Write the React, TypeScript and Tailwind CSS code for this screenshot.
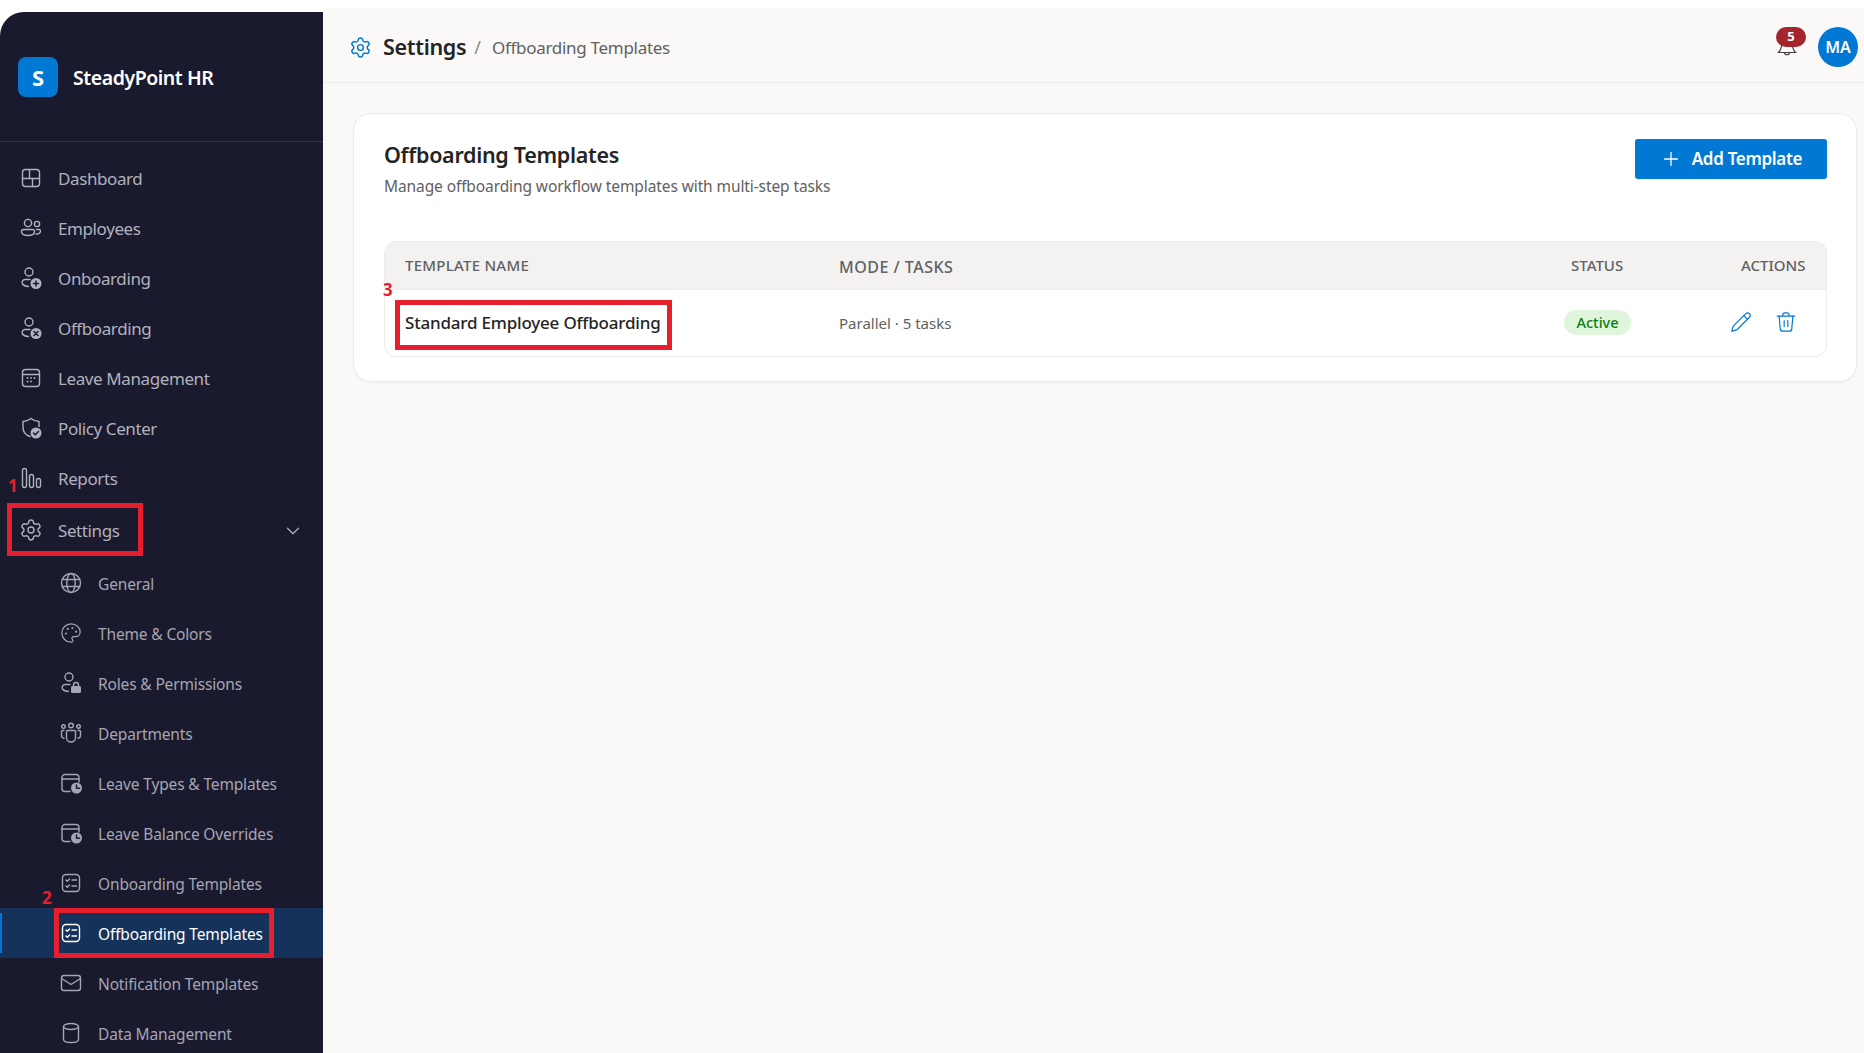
import { ChevronDown, Palette, Pencil, Plus, Settings } from "lucide-react";
import type { ReactNode } from "react";

const Ic = ({ children }: { children: ReactNode }) => (
	<svg viewBox="0 0 24 24" fill="none" stroke="currentColor" strokeWidth="1.4" strokeLinecap="round" strokeLinejoin="round" className="w-[24px] h-[24px] shrink-0">
		{children}
	</svg>
);

const Dashboard = () => (
	<Ic>
		<rect x="3.5" y="3.5" width="17" height="17" rx="3" />
		<path d="M10.5 3.5v9M3.5 12.5h17M13.5 12.5v8" />
	</Ic>
);
const People = () => (
	<Ic>
		<circle cx="9" cy="7" r="3.6" />
		<circle cx="18" cy="8" r="2.6" />
		<path d="M4.5 13.5h9a2 2 0 0 1 2 2c0 2.8-3 4-6.5 4s-6.5-1.2-6.5-4a2 2 0 0 1 2-2z" />
		<path d="M17.5 13.5h2.5a1.5 1.5 0 0 1 1.5 1.500c0 2-1.700 3-4.500 3" />
	</Ic>
);
const PersonBase = () => (
	<>
		<circle cx="10" cy="6" r="4" />
		<path d="M11 13.5H6a3 3 0 0 0-2.500 4.500c1 1.500 3 2.300 6 2.500" />
	</>
);
const PersonAdd = () => (
	<Ic>
		<PersonBase />
		<circle cx="17" cy="17.500" r="5.500" fill="currentColor" stroke="none" />
		<path d="M17 15v5M14.500 17.500h5" stroke="#1a1a2e" strokeWidth="1.500" />
	</Ic>
);
const PersonX = () => (
	<Ic>
		<PersonBase />
		<circle cx="17" cy="17.500" r="5.500" fill="currentColor" stroke="none" />
		<path d="M15 15.500l4 4M19 15.500l-4 4" stroke="#1a1a2e" strokeWidth="1.500" />
	</Ic>
);
const PersonLock = () => (
	<Ic>
		<PersonBase />
		<path d="M14.500 15v-1a2.500 2.500 0 0 1 5 0v1" />
		<rect x="12" y="15" width="10" height="7" rx="1.500" fill="currentColor" stroke="none" />
	</Ic>
);
const Calendar = () => (
	<Ic>
		<rect x="3.500" y="3.500" width="17" height="17" rx="3" />
		<path d="M3.500 8.500h17" />
		<path d="M8.500 12h.01M12 12h.01M15.500 12h.01M8.500 15.500h.01M12 15.500h.01" strokeWidth="1.800" />
	</Ic>
);
const Shield = () => (
	<Ic>
		<path d="M12 2.500c2.500 2 5 3 8 3v5M11 20.500C6.500 19 4 15.500 4 11V5.500c3 0 5.500-1 8-3" />
		<circle cx="17" cy="17" r="5.500" fill="currentColor" stroke="none" />
		<path d="M14.500 17l1.800 1.800 3.200-3.300" stroke="#1a1a2e" strokeWidth="1.500" />
	</Ic>
);
const Bars = () => (
	<Ic>
		<rect x="3.500" y="2.500" width="4" height="19" rx="2" />
		<rect x="10.500" y="8.500" width="4" height="13" rx="2" />
		<rect x="17.500" y="12.500" width="4" height="9" rx="2" />
	</Ic>
);
const GlobeIcon = () => (
	<Ic>
		<circle cx="12" cy="12" r="9.500" />
		<ellipse cx="12" cy="12" rx="4.200" ry="9.500" />
		<path d="M3.300 8.500h17.400M3.300 15.500h17.400" />
	</Ic>
);
const Team = () => (
	<Ic>
		<circle cx="12" cy="4.500" r="2.300" />
		<circle cx="4.500" cy="5.500" r="1.800" />
		<circle cx="19.500" cy="5.500" r="1.800" />
		<path d="M8.500 9.500h7a1 1 0 0 1 1 1v6a4.500 4.500 0 0 1-9 0v-6a1 1 0 0 1 1-1z" />
		<path d="M5 9.500H3.500a1 1 0 0 0-1 1v4c0 1.500 1 2.500 2.500 2.700M19 9.500h1.500a1 1 0 0 1 1 1v4c0 1.500-1 2.500-2.500 2.700" />
	</Ic>
);
const CalClock = () => (
	<Ic>
		<path d="M11 20.500H6a3 3 0 0 1-3-3v-11a3 3 0 0 1 3-3h11a3 3 0 0 1 3 3V11" />
		<path d="M3 8h17" />
		<circle cx="17.500" cy="17" r="5.500" fill="currentColor" stroke="none" />
		<path d="M17.500 14v3.200h3" stroke="#1a1a2e" strokeWidth="1.500" />
	</Ic>
);
const Checklist = () => (
	<Ic>
		<rect x="3.500" y="3.500" width="17" height="17" rx="3.500" />
		<path d="M7 9l1.300 1.300L10.500 8M13 9h4.500M7 15l1.300 1.300 2.200-2.300M13 15h4.500" />
	</Ic>
);
const Mail = () => (
	<Ic>
		<rect x="2.500" y="4.500" width="19" height="15" rx="2.500" />
		<path d="M2.500 7.500l9.500 6 9.500-6" />
	</Ic>
);
const Data = () => (
	<Ic>
		<ellipse cx="12" cy="5.500" rx="7.500" ry="3" />
		<path d="M4.500 5.500v13c0 1.700 3.400 3 7.500 3s7.500-1.300 7.500-3v-13" />
	</Ic>
);

const NavItem = ({ icon, label, note }: { icon: ReactNode; label: string; note?: ReactNode }) => (
	<div className="relative flex items-center h-[50px] pl-[19px] gap-[15px] text-[#b1b1bd] text-[17px] tracking-[-0.4px]">
		{icon}
		<span className="pt-[2px]">{label}</span>
		{note}
	</div>
);

const SubItem = ({ icon, label, active, note }: { icon: ReactNode; label: string; active?: boolean; note?: ReactNode }) => (
	<div
		className={
			active
				? "relative flex items-center h-[50px] pl-[59px] gap-[15px] text-white bg-[#14325a] text-[15.5px] tracking-[-0.15px]"
				: "relative flex items-center h-[50px] pl-[59px] gap-[15px] text-[#a5a5b3] text-[15.5px] tracking-[-0.15px]"
		}
	>
		{active && <div className="absolute left-0 top-[5px] bottom-[5px] w-[2px] bg-[#0078d4]" />}
		{icon}
		<span className="pt-[3px]">{label}</span>
		{note}
	</div>
);

const Num = ({ n, className }: { n: string; className: string }) => (
	<span className={"absolute font-bold text-[#e61e2d] text-[17px] leading-none " + className}>{n}</span>
);

export default function App() {
	return (
		<div className="flex h-screen w-full overflow-hidden bg-white font-['Noto_Sans',sans-serif]">
			<aside className="w-[323px] shrink-0 mt-[12px] bg-[#1a1a2e] rounded-tl-[24px] flex flex-col">
				<div className="h-[130px] shrink-0 border-b border-[#33334a] flex items-center gap-[15px] pl-[18px] pt-[1px]">
					<div className="w-[40px] h-[40px] rounded-[8px] bg-[#0078d4] flex items-center justify-center text-white font-bold text-[22px]">S</div>
					<span className="pt-[2px] text-white font-semibold text-[19.5px] tracking-[-0.45px]">SteadyPoint HR</span>
				</div>
				<nav className="flex flex-col pt-[11px]">
					<NavItem icon={<Dashboard />} label="Dashboard" />
					<NavItem icon={<People />} label="Employees" />
					<NavItem icon={<PersonAdd />} label="Onboarding" />
					<NavItem icon={<PersonX />} label="Offboarding" />
					<NavItem icon={<Calendar />} label="Leave Management" />
					<NavItem icon={<Shield />} label="Policy Center" />
					<NavItem icon={<Bars />} label="Reports" />
					<div className="mt-[2px] mb-[3px]">
						<NavItem
							icon={<Settings size={24} strokeWidth={1.4} />}
							label="Settings"
							note={
								<>
									<ChevronDown size={22} strokeWidth={1.3} className="absolute right-[19px] top-[15px]" />
									<div className="absolute left-[7px] top-[-2px] w-[136px] h-[53px] border-[5px] border-[#e61e2d]" />
									<Num n="1" className="left-[8px] top-[-28px]" />
								</>
							}
						/>
					</div>
					<SubItem icon={<GlobeIcon />} label="General" />
					<SubItem
						icon={
							<span className="w-[24px] h-[24px] shrink-0 flex items-center justify-center">
								<Palette size={22} strokeWidth={1.3} />
							</span>
						}
						label="Theme &amp; Colors"
					/>
					<SubItem icon={<PersonLock />} label="Roles &amp; Permissions" />
					<SubItem icon={<Team />} label="Departments" />
					<SubItem icon={<CalClock />} label="Leave Types &amp; Templates" />
					<SubItem icon={<CalClock />} label="Leave Balance Overrides" />
					<SubItem icon={<Checklist />} label="Onboarding Templates" />
					<SubItem
						icon={<Checklist />}
						label="Offboarding Templates"
						active
						note={
							<>
								<div className="absolute left-[54px] top-0 w-[220px] h-[50px] border-[5px] border-[#e61e2d]" />
								<Num n="2" className="left-[42px] top-[-19px]" />
							</>
						}
					/>
					<SubItem icon={<Mail />} label="Notification Templates" />
					<SubItem icon={<Data />} label="Data Management" />
				</nav>
			</aside>

			<main className="flex-1 min-w-0 mt-[8px] bg-[#faf9f8] flex flex-col">
				<header className="h-[75px] shrink-0 border-b border-[#edebe9] flex items-center pl-[26px] pr-[6px] pt-[4px]">
					<Settings size={23} strokeWidth={1.5} className="text-[#0078d4]" />
					<span className="ml-[11px] pt-[1px] font-semibold text-[#242424] text-[21.5px] tracking-[-0.3px]">Settings</span>
					<span className="ml-[8px] pt-[1px] text-[#8a8886] text-[18px]">/</span>
					<span className="ml-[11px] pt-[2px] text-[#616161] text-[17px] tracking-[-0.3px]">Offboarding Templates</span>
					<div className="ml-auto flex items-center gap-[12px]">
						<div className="relative w-[30px] h-[40px]">
							<svg viewBox="0 0 20 20" fill="none" stroke="#424242" strokeWidth="1.200" className="absolute left-[1px] top-[10px] w-[20px] h-[20px]">
								<path d="M5 4c0 6-1 9-3.500 11.500h17C16 13 15 10 15 4M7.500 15.500c0 3 5 3 5 0" />
							</svg>
							<span className="absolute left-0 top-0 w-[30px] h-[20px] rounded-full bg-[#a4262c] text-white text-[13px] font-bold flex items-center justify-center">5</span>
						</div>
						<div className="w-[40px] h-[40px] rounded-full bg-[#0078d4] text-white font-semibold text-[16px] flex items-center justify-center">MA</div>
					</div>
				</header>

				<div className="pl-[30px] pr-[7px] pt-[30px]">
					<section className="relative bg-white border border-[#edebe9] rounded-[18px] h-[269px] pl-[30px] pr-[29px] pt-[25px] shadow-[0_1px_2px_rgba(0,0,0,0.04)]">
						<div className="flex justify-between items-start h-[102px]">
							<div>
								<h2 className="font-semibold text-[#242424] text-[21.5px] leading-[32px] tracking-[-0.3px]">Offboarding Templates</h2>
								<p className="text-[#616161] text-[15.5px] leading-[24px] mt-[3px] tracking-[-0.1px]">Manage offboarding workflow templates with multi-step tasks</p>
							</div>
							<button className="w-[192px] h-[40px] bg-[#0078d4] rounded-[3px] text-white font-semibold text-[17px] tracking-[-0.3px] flex items-center justify-center gap-[10px]">
								<Plus size={22} strokeWidth={1.4} />
								Add Template
							</button>
						</div>
						<div className="border border-[#edebe9] rounded-[12px] h-[116px] overflow-hidden">
							<div className="relative h-[47px] bg-[#f3f2f1] flex items-center font-medium text-[#616161] text-[15px]">
								<span className="ml-[20px] w-[434px] tracking-[0.25px]">TEMPLATE NAME</span>
								<span className="pt-[2px] text-[16px] tracking-[0.5px]">MODE / TASKS</span>
								<span className="absolute left-[1186px]">STATUS</span>
								<span className="absolute left-[1356px]">ACTIONS</span>
							</div>
							<div className="relative h-[67px] flex items-center border-t border-[#edebe9]">
								<span className="ml-[20px] w-[434px] font-medium text-[#242424] text-[17px] tracking-[-0.2px]">Standard Employee Offboarding</span>
								<span className="pt-[1px] text-[#616161] text-[15px]">Parallel · 5 tasks</span>
								<span className="absolute left-[1179px] top-[20px] w-[67px] h-[25px] rounded-full bg-[#dff6dd] text-[#107c10] font-medium text-[14.5px] flex items-center justify-center">Active</span>
								<Pencil size={22} strokeWidth={1.3} className="absolute left-[1345px] top-[21px] text-[#0078d4]" />
								<svg viewBox="0 0 24 24" fill="none" stroke="currentColor" strokeWidth="1.3" strokeLinecap="round" strokeLinejoin="round" className="absolute left-[1390px] top-[21px] w-[22px] h-[22px] text-[#0078d4]">
									<path d="M2.500 5.500h19M8.500 5.500V4.500a2.500 2.500 0 0 1 2.500-2.500h2a2.500 2.500 0 0 1 2.500 2.500v1" />
									<path d="M4.500 5.500l1.200 14a2.700 2.700 0 0 0 2.700 2.500h7.200a2.700 2.700 0 0 0 2.700-2.500l1.200-14" />
									<path d="M10 10.500v6.500M14 10.500v6.500" />
								</svg>
							</div>
						</div>
						<div className="absolute left-[41px] top-[186px] w-[277px] h-[50px] border-[5px] border-[#e61e2d]" />
						<Num n="3" className="left-[29px] top-[167px]" />
					</section>
				</div>
			</main>
		</div>
	);
}
